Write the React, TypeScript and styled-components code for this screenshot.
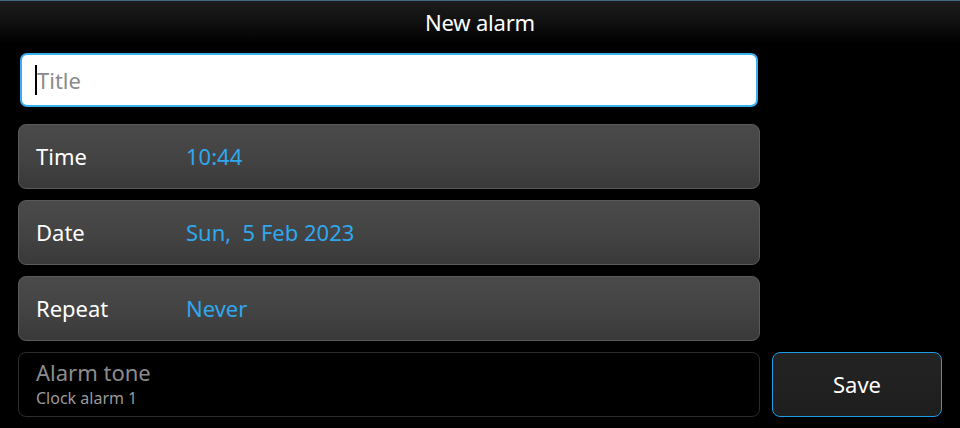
import React from "react";
import styled, { createGlobalStyle } from "styled-components";

const GlobalStyle = createGlobalStyle`
  html, body {
    margin: 0;
    padding: 0;
    background: #000;
  }
  body {
    font-family: "Noto Sans", "Open Sans", sans-serif;
    color: #fff;
  }
`;

interface fieldRow {
  label: string;
  value: string;
}

const ROWS: fieldRow[] = [
  { label: "Time", value: "10:44" },
  { label: "Date", value: "Sun,  5 Feb 2023" },
  { label: "Repeat", value: "Never" },
];

const App = () => {
  return (
    <Screen>
      <GlobalStyle />
      <Header>New alarm</Header>
      <Form>
        <TitleField>
          <Caret />
          <TitleInput placeholder="Title" />
        </TitleField>
        {ROWS.map((row) => (
          <PickerRow key={row.label}>
            <RowLabel>{row.label}</RowLabel>
            <RowValue>{row.value}</RowValue>
          </PickerRow>
        ))}
        <ToneRow>
          <ToneTitle>Alarm tone</ToneTitle>
          <ToneName>Clock alarm 1</ToneName>
        </ToneRow>
        <SaveButton>Save</SaveButton>
      </Form>
    </Screen>
  );
};

const Screen = styled.div`
  width: 960px;
  height: 428px;
  overflow: hidden;
  background: #000;
`;

const Header = styled.div`
  height: 44px;
  border-top: 1px solid #3f6a86;
  box-sizing: border-box;
  background: linear-gradient(to bottom, #1c1c1c 0%, #101010 50%, #000 100%);
  display: flex;
  justify-content: center;
  align-items: center;
  padding-bottom: 1px;
  font-size: 22px;
  letter-spacing: -0.2px;
`;

const Form = styled.div`
  display: grid;
  grid-template-columns: 742px 170px;
  grid-template-rows: 60px repeat(4, 65px);
  column-gap: 12px;
  row-gap: 11px;
  padding: 9px 0 0 18px;
`;

const TitleField = styled.div`
  grid-column: 1;
  height: 54px;
  margin: 0 2px;
  box-sizing: border-box;
  background: #fff;
  border: 2px solid #38aef5;
  border-radius: 7px;
  display: flex;
  align-items: center;
  padding-left: 13px;
`;

const Caret = styled.span`
  width: 2px;
  height: 30px;
  background: #000;
`;

const TitleInput = styled.input`
  flex: 1;
  border: none;
  outline: none;
  background: transparent;
  font-family: "Noto Sans", sans-serif;
  font-size: 22px;
  color: #222;
  padding: 0;

  &::placeholder {
    color: #8a8a8a;
  }
`;

const PickerRow = styled.div`
  grid-column: 1;
  box-sizing: border-box;
  border-radius: 8px;
  border: 1px solid #5a5a5a;
  background: linear-gradient(to bottom, #4b4a4a 0%, #434242 60%, #393939 100%);
  display: flex;
  align-items: center;
  padding-left: 17px;
  padding-bottom: 2px;
  font-size: 22px;
`;

const RowLabel = styled.span`
  width: 150px;
  color: #fff;
`;

const RowValue = styled.span`
  color: #2fa8ee;
  white-space: pre;
`;

const ToneRow = styled.div`
  grid-column: 1;
  box-sizing: border-box;
  border-radius: 8px;
  border: 1px solid #2c2c2c;
  display: flex;
  flex-direction: column;
  justify-content: center;
  padding-left: 17px;
  padding-bottom: 1px;
`;

const ToneTitle = styled.span`
  font-size: 22px;
  line-height: 27px;
  color: #8c8c8c;
`;

const ToneName = styled.span`
  font-size: 16px;
  line-height: 24px;
  color: #9a9a9a;
`;

const SaveButton = styled.button`
  grid-column: 2;
  width: 170px;
  box-sizing: border-box;
  border-radius: 8px;
  border: 1.5px solid #1d9be6;
  background: linear-gradient(to bottom, #232323, #1e1e1e);
  color: #fff;
  font-family: "Noto Sans", sans-serif;
  font-size: 22px;
  padding: 0 0 2px;
`;

export default App;
